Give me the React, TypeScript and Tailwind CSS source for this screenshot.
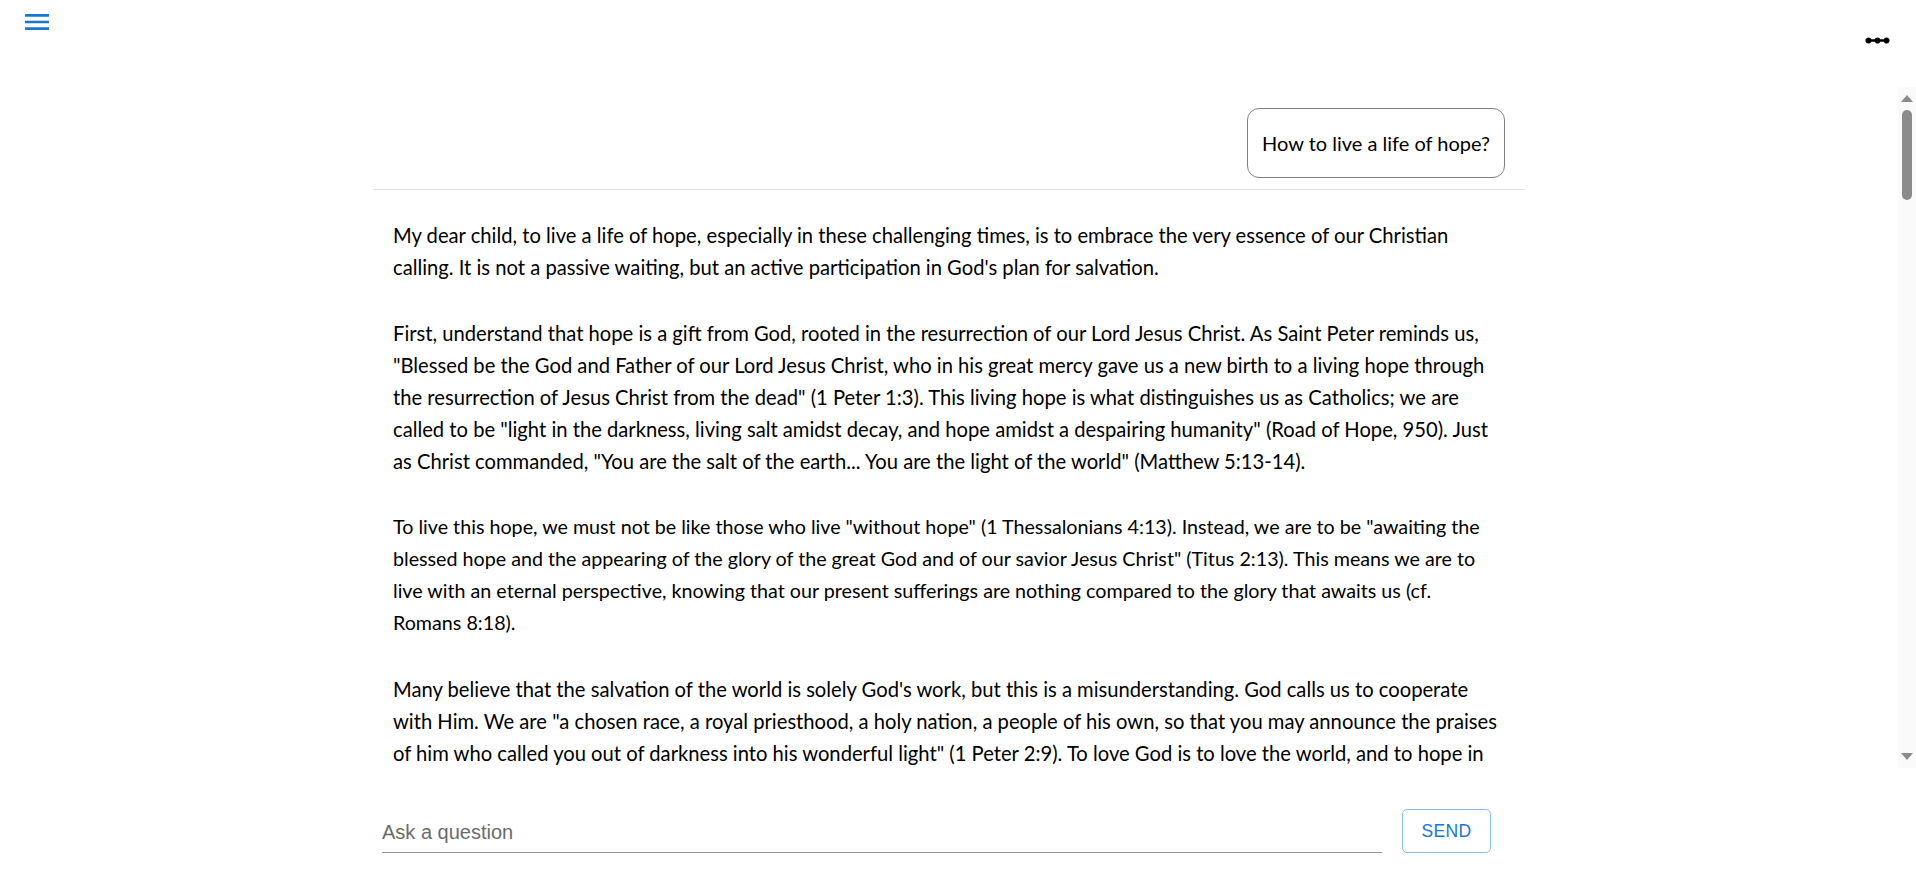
import React, { useState } from "react";

// font sizes are tuned per paragraph so the lines break where the original does
const paragraphs = [
  {
    size: "text-[20.2px]",
    text: "My dear child, to live a life of hope, especially in these challenging times, is to embrace the very essence of our Christian calling. It is not a passive waiting, but an active participation in God's plan for salvation.",
  },
  {
    size: "text-[20.2px]",
    text: "First, understand that hope is a gift from God, rooted in the resurrection of our Lord Jesus Christ. As Saint Peter reminds us, \"Blessed be the God and Father of our Lord Jesus Christ, who in his great mercy gave us a new birth to a living hope through the resurrection of Jesus Christ from the dead\" (1 Peter 1:3). This living hope is what distinguishes us as Catholics; we are called to be \"light in the darkness, living salt amidst decay, and hope amidst a despairing humanity\" (Road of Hope, 950). Just as Christ commanded, \"You are the salt of the earth... You are the light of the world\" (Matthew 5:13-14).",
  },
  {
    size: "text-[19.7px]",
    text: "To live this hope, we must not be like those who live \"without hope\" (1 Thessalonians 4:13). Instead, we are to be \"awaiting the blessed hope and the appearing of the glory of the great God and of our savior Jesus Christ\" (Titus 2:13). This means we are to live with an eternal perspective, knowing that our present sufferings are nothing compared to the glory that awaits us (cf. Romans\u00a08:18).",
  },
  {
    size: "text-[20.2px]",
    text: "Many believe that the salvation of the world is solely God's work, but this is a misunderstanding. God calls us to cooperate with Him. We are \"a chosen race, a royal priesthood, a holy nation, a people of his own, so that you may announce the praises of him who called you out of darkness into his wonderful light\" (1 Peter 2:9). To love God is to love the world, and to hope in the world as the Father hoped in it when he sent his Son, not to condemn the world, but that the world might be saved through him (John 3:17).",
  },
  {
    size: "text-[20.2px]",
    text: "Therefore, nourish your hope through prayer, the sacraments and works of charity. Let every day be an offering to the Lord, and trust that he who began a good work in you will bring it to completion (Philippians 1:6).",
  },
];

const App = () => {
  const [question, setQuestion] = useState("");

  return (
    <div className="h-screen flex flex-col bg-white text-black" style={{ fontFamily: "Lato, 'Noto Sans', sans-serif" }}>
      {/* top bar */}
      <header className="h-[87px] shrink-0 flex justify-between items-start">
        <button className="ml-[21px] mt-[6px] w-8 h-8 text-[#1976d2]">
          <svg viewBox="0 0 24 24" className="w-8 h-8" fill="currentColor">
            <path d="M3 18h18v-2H3zm0-5h18v-2H3zm0-7v2h18V6z" />
          </svg>
        </button>
        <button className="mr-[24px] mt-[26px] w-[29px] h-[29px] text-black">
          <svg viewBox="0 0 24 24" className="w-[29px] h-[29px]" fill="currentColor">
            <path d="M19.5 9.5c-1.03 0-1.9.62-2.29 1.5h-2.92c-.39-.88-1.26-1.5-2.29-1.5s-1.9.62-2.29 1.5H6.79c-.39-.88-1.26-1.5-2.29-1.5C3.12 9.5 2 10.62 2 12s1.12 2.5 2.5 2.5c1.03 0 1.9-.62 2.29-1.5h2.92c.39.88 1.26 1.5 2.29 1.5s1.9-.62 2.29-1.5h2.92c.39.88 1.26 1.5 2.29 1.5 1.38 0 2.5-1.12 2.5-2.5s-1.12-2.5-2.5-2.5" />
          </svg>
        </button>
      </header>

      {/* conversation + scrollbar */}
      <div className="flex-1 min-h-0 flex">
        <main className="flex-1 overflow-y-auto [scrollbar-width:none]">
          <div className="max-w-6xl mx-auto">
            <div className="flex justify-end pt-[21px] pr-5 pb-[11px] border-b border-[#e0e0e0]">
              <div className="border border-[#808080] rounded-[12px] h-[70px] px-[14px] flex items-center text-[20px]">
                How to live a life of hope?
              </div>
            </div>
            <div className="px-5 pt-[29px] pb-8">
              {paragraphs.map((p, i) => (
                <p key={i} className={`${p.size} leading-[32px] mb-[34px]`}>
                  {p.text}
                </p>
              ))}
            </div>
          </div>
        </main>

        <div className="w-[18px] shrink-0 bg-[#fafafa] flex flex-col items-center">
          <svg viewBox="0 0 12 7" className="w-3 h-[7px] mt-[8px] shrink-0" fill="#8b8b8b">
            <path d="M6 0L12 7H0z" />
          </svg>
          <div className="w-[10px] h-[90px] mt-2 rounded-full bg-[#8b8b8b] shrink-0" />
          <div className="flex-1" />
          <svg viewBox="0 0 12 7" className="w-3 h-[7px] mb-[8px] shrink-0" fill="#8b8b8b">
            <path d="M0 0H12L6 7z" />
          </svg>
        </div>
      </div>

      {/* question input */}
      <footer className="h-[104px] shrink-0">
        <div className="max-w-6xl mx-auto flex items-end gap-5 pt-[41px]">
          <input
            value={question}
            onChange={(e) => setQuestion(e.target.value)}
            placeholder="Ask a question"
            className="w-[1000px] h-[40px] border-b border-[#949494] outline-none text-[20px] text-black placeholder:text-[#6b6b6b]"
            style={{ fontFamily: "'Liberation Sans', Arial, sans-serif" }}
          />
          <button
            className="w-[89px] h-[44px] rounded-[5px] border border-[#8cbbe9] text-[#1976d2] text-[17.5px] tracking-[0.4px]"
            style={{ fontFamily: "'Liberation Sans', Arial, sans-serif" }}
          >
            SEND
          </button>
        </div>
      </footer>
    </div>
  );
};

export default App;
